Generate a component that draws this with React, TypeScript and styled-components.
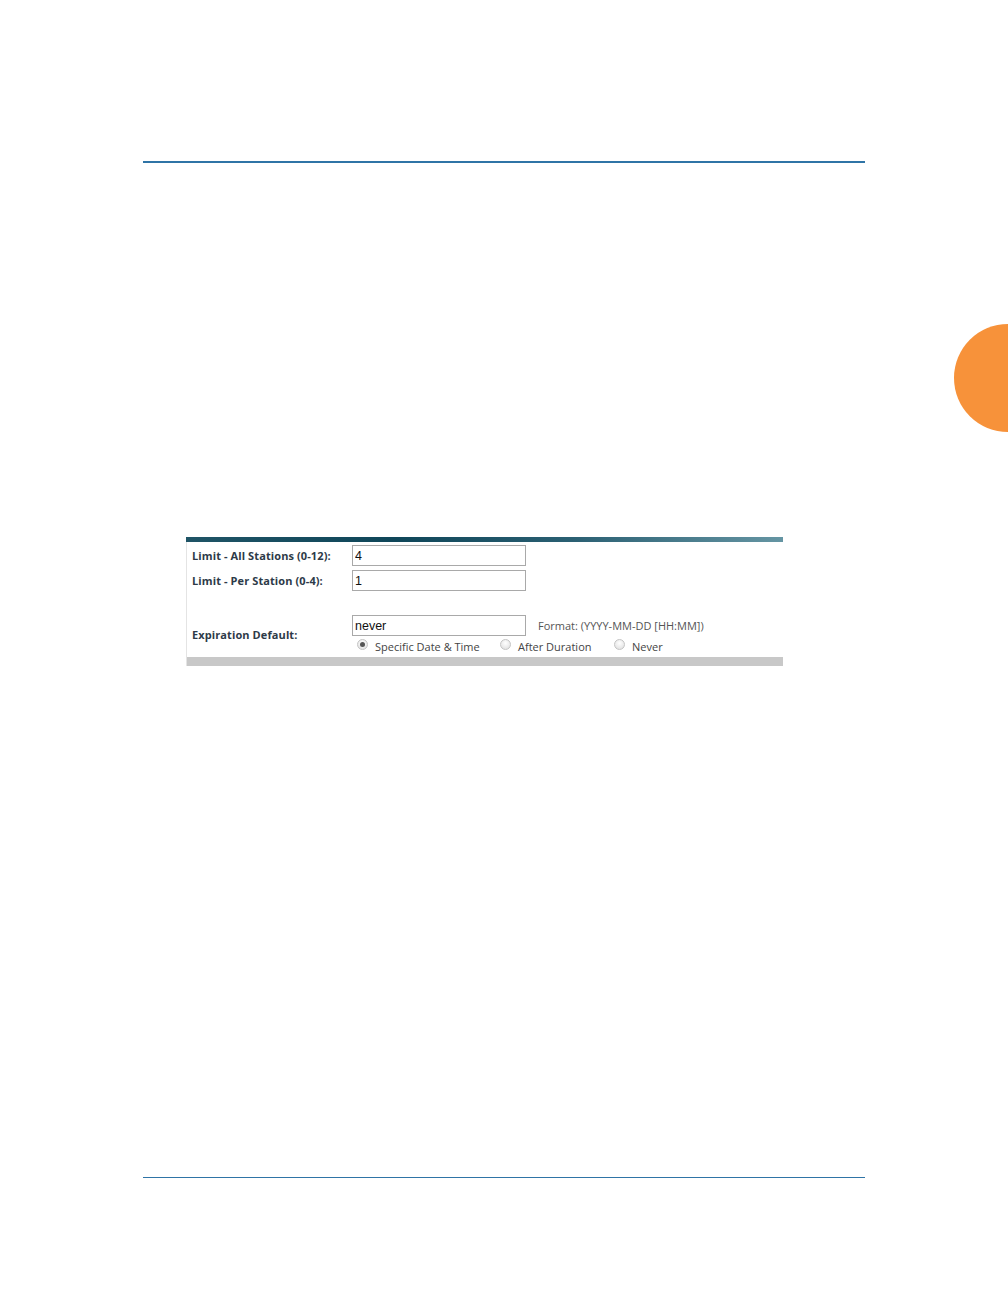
import React from "react";
import styled, { createGlobalStyle } from "styled-components";

const GlobalStyle = createGlobalStyle`
  html, body {
    margin: 0;
    padding: 0;
    background: #ffffff;
  }
  body {
    font-family: "Open Sans", "Liberation Sans", Arial, sans-serif;
  }
`;

const Page = styled.div`
  position: relative;
  width: 1008px;
  height: 1296px;
  overflow: hidden;
  display: flex;
  flex-direction: column;
  box-sizing: border-box;
  padding-bottom: 118px;
`;

const Rule = styled.div<{ $thick: number; $top?: number }>`
  height: ${(p) => p.$thick}px;
  background: #2f74a6;
  margin: ${(p) => (p.$top !== undefined ? `${p.$top}px` : "auto")} 143px 0
    143px;
`;

const ChapterTab = styled.div`
  position: absolute;
  right: -54px;
  top: 324px;
  width: 108px;
  height: 108px;
  border-radius: 50%;
  background: #f7923a;
`;

const Panel = styled.div`
  margin: 374px 0 0 186px;
  width: 597px;
`;

const TitleBar = styled.div`
  height: 5px;
  background: linear-gradient(
    to right,
    #1f5466 0%,
    #0f4659 35%,
    #2b6073 65%,
    #6595a3 100%
  );
`;

const Body = styled.div`
  border-left: 1px solid #e4e4e4;
  padding-top: 3px;
`;

const Row = styled.div<{ $gapTop?: number }>`
  display: grid;
  grid-template-columns: 165px 1fr;
  align-items: center;
  margin-top: ${(p) => p.$gapTop ?? 0}px;
`;

const Label = styled.div<{ $lift?: number }>`
  padding-left: 5px;
  margin-bottom: ${(p) => p.$lift ?? 0}px;
  font-size: 11px;
  font-weight: 700;
  color: #2d3a48;
  letter-spacing: 0.1px;
`;

const Field = styled.div`
  display: flex;
  align-items: center;
  gap: 12px;
`;

const Stack = styled.div`
  display: flex;
  flex-direction: column;
`;

const TextBox = styled.input`
  box-sizing: border-box;
  width: 174px;
  height: 21px;
  margin: 0;
  padding: 0 2px;
  border: 1px solid #a9a9a9;
  font-family: "Liberation Sans", Arial, sans-serif;
  font-size: 12.5px;
  color: #111;
  background: #fff;
  outline: none;
`;

const Hint = styled.span`
  font-size: 11px;
  color: #555;
`;

const RadioRow = styled.div`
  display: flex;
  align-items: center;
  height: 21px;
  padding-left: 5px;
`;

const RadioOption = styled.label<{ $width: number }>`
  display: flex;
  align-items: center;
  width: ${(p) => p.$width}px;
  font-size: 11px;
  color: #444;
  gap: 7px;
`;

const Radio = styled.span<{ $checked?: boolean }>`
  position: relative;
  width: 11px;
  height: 11px;
  border-radius: 50%;
  border: 1px solid #c4c4c4;
  box-sizing: border-box;
  background: radial-gradient(circle at 50% 35%, #ffffff 0%, #dcdcdc 100%);
  margin-top: -4px;

  &::after {
    content: "";
    display: ${(p) => (p.$checked ? "block" : "none")};
    position: absolute;
    left: 2px;
    top: 2px;
    width: 5px;
    height: 5px;
    border-radius: 50%;
    background: #555;
  }
`;

const FooterBar = styled.div`
  height: 9px;
  background: #c8c8c8;
`;

const options = [
  { label: "Specific Date & Time", checked: true, width: 143 },
  { label: "After Duration", checked: false, width: 114 },
  { label: "Never", checked: false, width: 60 },
];

export default function App() {
  return (
    <>
      <GlobalStyle />
      <Page>
        <Rule $thick={2} $top={161} />
        <ChapterTab />
        <Panel>
          <TitleBar />
          <Body>
            <Row>
              <Label>Limit - All Stations (0-12):</Label>
              <Field>
                <TextBox defaultValue="4" />
              </Field>
            </Row>
            <Row $gapTop={4}>
              <Label>Limit - Per Station (0-4):</Label>
              <Field>
                <TextBox defaultValue="1" />
              </Field>
            </Row>
            <Row $gapTop={24}>
              <Label $lift={3}>Expiration Default:</Label>
              <Stack>
                <Field>
                  <TextBox defaultValue="never" />
                  <Hint>Format: (YYYY-MM-DD [HH:MM])</Hint>
                </Field>
                <RadioRow>
                  {options.map((o) => (
                    <RadioOption key={o.label} $width={o.width}>
                      <Radio $checked={o.checked} />
                      {o.label}
                    </RadioOption>
                  ))}
                </RadioRow>
              </Stack>
            </Row>
            <FooterBar />
          </Body>
        </Panel>
        <Rule $thick={1} />
      </Page>
    </>
  );
}
